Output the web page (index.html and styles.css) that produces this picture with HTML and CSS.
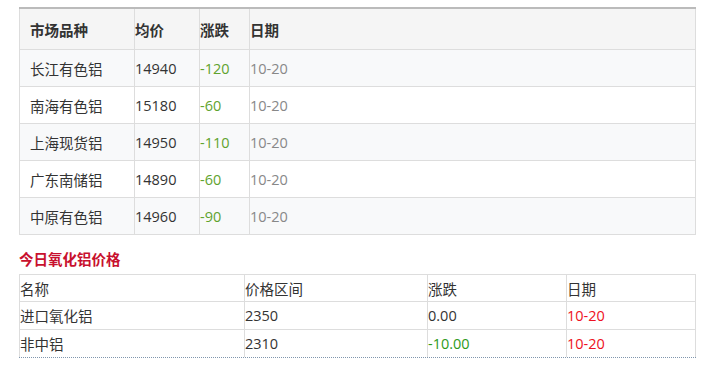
FILE: index.html
```html
<!DOCTYPE html>
<html lang="zh-CN">
<head>
<meta charset="utf-8">
<title>铝价</title>
<link rel="stylesheet" href="styles.css">
</head>
<body>
<div class="page">
  <table class="price">
    <colgroup>
      <col class="c1"><col class="c2"><col class="c3"><col class="c4">
    </colgroup>
    <thead>
      <tr><th>市场品种</th><th>均价</th><th>涨跌</th><th>日期</th></tr>
    </thead>
    <tbody>
      <tr><td>长江有色铝</td><td>14940</td><td class="down">-120</td><td class="date">10-20</td></tr>
      <tr><td>南海有色铝</td><td>15180</td><td class="down">-60</td><td class="date">10-20</td></tr>
      <tr><td>上海现货铝</td><td>14950</td><td class="down">-110</td><td class="date">10-20</td></tr>
      <tr><td>广东南储铝</td><td>14890</td><td class="down">-60</td><td class="date">10-20</td></tr>
      <tr><td>中原有色铝</td><td>14960</td><td class="down">-90</td><td class="date">10-20</td></tr>
    </tbody>
  </table>

  <h3 class="section-title">今日氧化铝价格</h3>

  <table class="alumina">
    <colgroup>
      <col class="a1"><col class="a2"><col class="a3"><col class="a4">
    </colgroup>
    <tr><td>名称</td><td>价格区间</td><td>涨跌</td><td>日期</td></tr>
    <tr><td>进口氧化铝</td><td>2350</td><td>0.00</td><td class="red">10-20</td></tr>
    <tr><td>非中铝</td><td>2310</td><td class="green">-10.00</td><td class="red">10-20</td></tr>
  </table>
</div>
</body>
</html>
```

FILE: styles.css
```css
html, body {
  margin: 0;
  padding: 0;
  background: #fff;
}

body {
  font-family: "Open Sans", "Noto Sans CJK SC", sans-serif;
  font-size: 14.5px;
  color: #333;
}

.page {
  padding: 7px 0 0 19px;
}

/* top price table */
.price {
  border-collapse: separate;
  border-spacing: 0;
  table-layout: fixed;
  width: 677px;
  border-top: 2px solid #bbbbbb;
}

.price .c1 { width: 116px; }
.price .c2 { width: 65px; }
.price .c3 { width: 50px; }
.price .c4 { width: 446px; }

.price th,
.price td {
  border-right: 1px solid #dddddd;
  border-bottom: 1px solid #dddddd;
  padding: 0;
  text-align: left;
  white-space: nowrap;
}

.price th:first-child,
.price td:first-child {
  border-left: 1px solid #dddddd;
  padding-left: 10px;
}

.price th {
  height: 40px;
  background: #f5f5f5;
  font-weight: bold;
  color: #333;
}

.price td {
  height: 36px;
  color: #333;
}

.price tbody tr:nth-child(odd) td {
  background: #f8f9fa;
}

.price td.down { color: #5fa32e; }
.price td.date { color: #888888; }

/* section title */
.section-title {
  margin: 15px 0 4px 0;
  font-size: 14.5px;
  line-height: 20px;
  font-weight: bold;
  color: #c8102e;
}

/* alumina table */
.alumina {
  border-collapse: separate;
  border-spacing: 0;
  table-layout: fixed;
  width: 677px;
  border-top: 1px solid #dddddd;
  border-bottom: 1px dotted #8096ad;
}

.alumina .a1 { width: 226px; }
.alumina .a2 { width: 183px; }
.alumina .a3 { width: 139px; }
.alumina .a4 { width: 129px; }

.alumina td {
  padding: 0;
  height: 27px;
  border-right: 1px solid #dddddd;
  border-bottom: 1px solid #dddddd;
  color: #333;
  white-space: nowrap;
}

.alumina tr:first-child td {
  height: 26px;
}

.alumina tr:last-child td {
  border-bottom: none;
}

.alumina td:first-child {
  border-left: 1px solid #dddddd;
}

.alumina td.green { color: #2e9a1a; }
.alumina td.red { color: #ee1122; }
```
